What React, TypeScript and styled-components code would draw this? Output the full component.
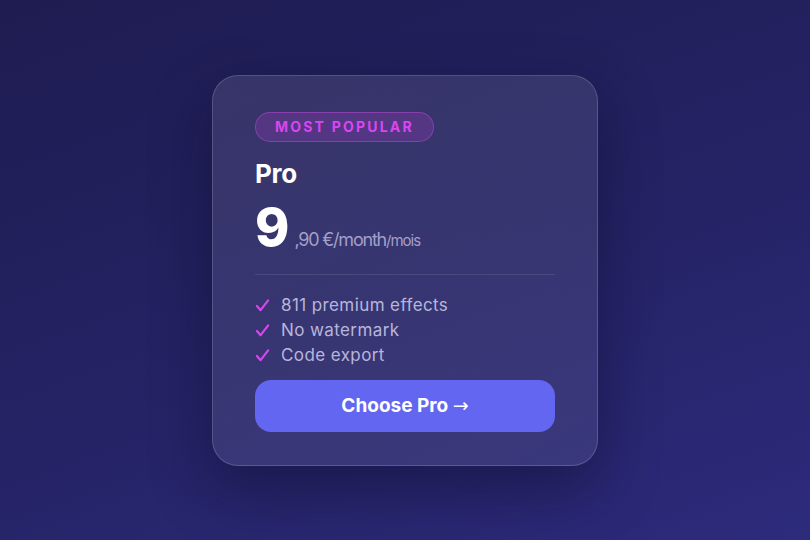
import React from "react";
import styled, { createGlobalStyle } from "styled-components";

const GlobalStyle = createGlobalStyle`
  html, body {
    margin: 0;
    padding: 0;
    height: 100%;
  }
  body {
    font-family: "Inter", "Noto Sans", sans-serif;
    background: #211f58;
  }
  #root {
    height: 100%;
  }
`;

const Page = styled.div`
  width: 810px;
  height: 540px;
  display: flex;
  align-items: center;
  justify-content: center;
  background: linear-gradient(160deg, #1e1c50 0%, #252365 55%, #2d2b7c 100%);
`;

const Card = styled.div`
  width: 300px;
  padding: 36px 42px 33px;
  box-sizing: content-box;
  border-radius: 26px;
  border: 1px solid rgba(255, 255, 255, 0.16);
  background: linear-gradient(150deg, rgba(255, 255, 255, 0.1), rgba(255, 255, 255, 0.08));
  box-shadow: 0 24px 60px rgba(10, 8, 40, 0.45);
  display: flex;
  flex-direction: column;
`;

const Badge = styled.span`
  align-self: flex-start;
  height: 28px;
  padding: 0 19px;
  display: inline-flex;
  align-items: center;
  border-radius: 999px;
  background: rgba(192, 60, 220, 0.22);
  border: 1px solid rgba(210, 80, 230, 0.4);
  color: #d946ef;
  font-size: 14px;
  font-weight: 700;
  letter-spacing: 2.2px;
`;

const PlanName = styled.h2`
  margin: 16px 0 0;
  color: #ffffff;
  font-size: 26px;
  font-weight: 700;
  line-height: 31px;
  letter-spacing: -0.3px;
`;

const PriceRow = styled.div`
  margin-top: 8px;
  display: flex;
  align-items: baseline;
  gap: 6px;
`;

const Amount = styled.span`
  color: #ffffff;
  font-size: 52px;
  font-weight: 800;
  line-height: 62px;
  letter-spacing: -1px;
`;

const Suffix = styled.span`
  color: #a29fc9;
  font-size: 18px;
  letter-spacing: -1.2px;
`;

const SuffixSmall = styled.span`
  font-size: 15px;
  letter-spacing: -1px;
`;

const Divider = styled.hr`
  margin: 15px 0 0;
  border: none;
  height: 1px;
  background: rgba(255, 255, 255, 0.1);
`;

const Features = styled.ul`
  list-style: none;
  margin: 18px 0 0;
  padding: 0;
  display: flex;
  flex-direction: column;
`;

const Feature = styled.li`
  display: flex;
  align-items: center;
  gap: 11px;
  height: 25px;
  color: #b8b5dc;
  font-size: 17px;
  letter-spacing: 0.4px;
`;

const Check = styled.svg`
  width: 15px;
  height: 15px;
  flex: none;
`;

const Button = styled.button`
  margin-top: 12px;
  height: 52px;
  border: none;
  border-radius: 16px;
  background: #6366f1;
  color: #ffffff;
  font-family: inherit;
  font-size: 19px;
  font-weight: 700;
  cursor: pointer;
`;

const Arrow = styled.span`
  font-family: "DejaVu Sans", sans-serif;
  font-weight: 400;
`;

const CheckIcon = () => (
  <Check viewBox="0 0 16 16" fill="none">
    <path
      d="M2 8.5 L6 13 L14 2.5"
      stroke="#d946ef"
      strokeWidth="2.3"
      strokeLinecap="round"
      strokeLinejoin="round"
    />
  </Check>
);

const features = ["811 premium effects", "No watermark", "Code export"];

export default function App() {
  return (
    <>
      <GlobalStyle />
      <Page>
        <Card>
          <Badge>MOST POPULAR</Badge>
          <PlanName>Pro</PlanName>
          <PriceRow>
            <Amount>9</Amount>
            <Suffix>
              ,90 €/month<SuffixSmall>/mois</SuffixSmall>
            </Suffix>
          </PriceRow>
          <Divider />
          <Features>
            {features.map((f) => (
              <Feature key={f}>
                <CheckIcon />
                {f}
              </Feature>
            ))}
          </Features>
          <Button>
            Choose Pro <Arrow>→</Arrow>
          </Button>
        </Card>
      </Page>
    </>
  );
}
